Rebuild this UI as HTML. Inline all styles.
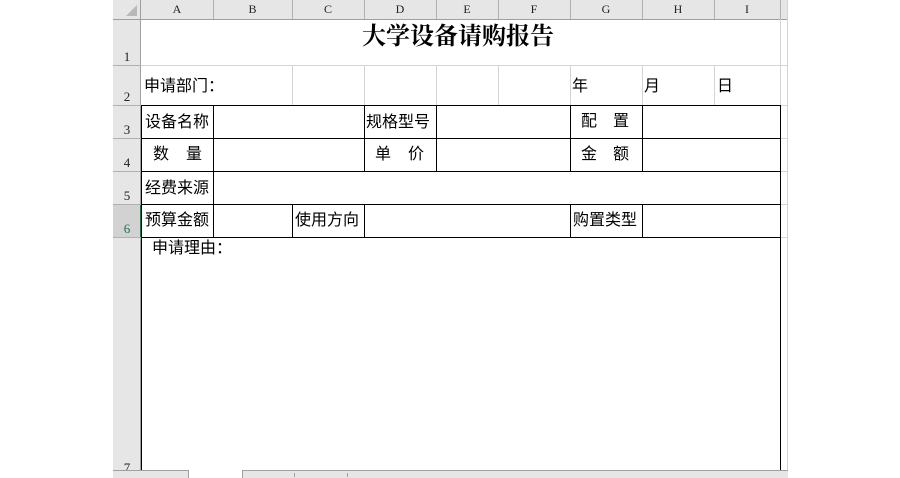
<!DOCTYPE html>
<html><head><meta charset="utf-8"><style>
body{margin:0;width:900px;height:477px;background:#fff;position:relative;overflow:hidden;font-family:"Liberation Sans","Noto Sans CJK SC",sans-serif;}
.a{position:absolute;}
.h{position:absolute;height:1px;}
.v{position:absolute;width:1px;}
.g{background:#d4d4d4;}
.k{background:#000;}
.hd{position:absolute;top:2px;font-family:"Liberation Serif",serif;font-size:12px;color:#222;text-align:center;}
.rn{position:absolute;left:113px;width:28px;text-align:center;font-family:"Liberation Serif",serif;font-size:13px;color:#222;}
.t{position:absolute;font-size:16px;color:#000;white-space:pre;line-height:18px;font-weight:normal;}
</style></head><body>
<div class="a" style="left:113px;top:0;width:674px;height:19px;background:#e6e6e6"></div>
<div class="a" style="left:113px;top:0;width:28px;height:470px;background:#e6e6e6"></div>
<div class="h" style="left:113px;top:19px;width:674px;background:#9f9f9f"></div>
<div class="v" style="left:140px;top:0;height:470px;background:#9f9f9f"></div>
<div class="v" style="left:787px;top:0;height:470px;background:#d4d4d4"></div>
<svg class="a" style="left:126px;top:5px" width="12" height="12"><polygon points="11,0 11,11 0,11" fill="#b8b8b8"/></svg>
<div class="v" style="left:213px;top:0;height:19px;background:#b0b0b0"></div>
<div class="v" style="left:292px;top:0;height:19px;background:#b0b0b0"></div>
<div class="v" style="left:364px;top:0;height:19px;background:#b0b0b0"></div>
<div class="v" style="left:436px;top:0;height:19px;background:#b0b0b0"></div>
<div class="v" style="left:498px;top:0;height:19px;background:#b0b0b0"></div>
<div class="v" style="left:570px;top:0;height:19px;background:#b0b0b0"></div>
<div class="v" style="left:642px;top:0;height:19px;background:#b0b0b0"></div>
<div class="v" style="left:714px;top:0;height:19px;background:#b0b0b0"></div>
<div class="v" style="left:780px;top:0;height:19px;background:#b0b0b0"></div>
<div class="hd" style="left:141px;width:72px">A</div>
<div class="hd" style="left:213px;width:79px">B</div>
<div class="hd" style="left:292px;width:72px">C</div>
<div class="hd" style="left:364px;width:72px">D</div>
<div class="hd" style="left:436px;width:62px">E</div>
<div class="hd" style="left:498px;width:72px">F</div>
<div class="hd" style="left:570px;width:72px">G</div>
<div class="hd" style="left:642px;width:72px">H</div>
<div class="hd" style="left:714px;width:66px">I</div>
<div class="h" style="left:113px;top:65px;width:28px;background:#b0b0b0"></div>
<div class="h" style="left:113px;top:105px;width:28px;background:#b0b0b0"></div>
<div class="h" style="left:113px;top:138px;width:28px;background:#b0b0b0"></div>
<div class="h" style="left:113px;top:171px;width:28px;background:#b0b0b0"></div>
<div class="h" style="left:113px;top:204px;width:28px;background:#b0b0b0"></div>
<div class="h" style="left:113px;top:237px;width:28px;background:#b0b0b0"></div>
<div class="a" style="left:113px;top:205px;width:28px;height:32px;background:#d2d2d2"></div>
<div class="v" style="left:140px;top:205px;height:32px;width:2px;background:#217346"></div>
<div class="rn" style="top:49px">1</div>
<div class="rn" style="top:89px">2</div>
<div class="rn" style="top:122px">3</div>
<div class="rn" style="top:155px">4</div>
<div class="rn" style="top:188px">5</div>
<div class="rn" style="top:221px;color:#217346">6</div>
<div class="rn" style="top:460px">7</div>
<div class="h g" style="left:141px;top:65px;width:646px"></div>
<div class="h g" style="left:780px;top:105px;width:7px"></div>
<div class="h g" style="left:780px;top:138px;width:7px"></div>
<div class="h g" style="left:780px;top:171px;width:7px"></div>
<div class="h g" style="left:780px;top:204px;width:7px"></div>
<div class="h g" style="left:780px;top:237px;width:7px"></div>
<div class="v g" style="left:292px;top:65px;height:40px"></div>
<div class="v g" style="left:364px;top:65px;height:40px"></div>
<div class="v g" style="left:436px;top:65px;height:40px"></div>
<div class="v g" style="left:498px;top:65px;height:40px"></div>
<div class="v g" style="left:570px;top:65px;height:40px"></div>
<div class="v g" style="left:642px;top:65px;height:40px"></div>
<div class="v g" style="left:714px;top:65px;height:40px"></div>
<div class="v g" style="left:780px;top:19px;height:86px"></div>
<div class="h k" style="left:141px;top:105px;width:640px"></div>
<div class="h k" style="left:141px;top:138px;width:640px"></div>
<div class="h k" style="left:141px;top:171px;width:640px"></div>
<div class="h k" style="left:141px;top:204px;width:640px"></div>
<div class="h k" style="left:141px;top:237px;width:640px"></div>
<div class="v k" style="left:141px;top:105px;height:365px"></div>
<div class="v k" style="left:780px;top:105px;height:365px"></div>
<div class="v k" style="left:213px;top:105px;height:132px"></div>
<div class="v k" style="left:364px;top:105px;height:66px"></div>
<div class="v k" style="left:436px;top:105px;height:66px"></div>
<div class="v k" style="left:570px;top:105px;height:66px"></div>
<div class="v k" style="left:642px;top:105px;height:66px"></div>
<div class="v k" style="left:292px;top:204px;height:33px"></div>
<div class="v k" style="left:364px;top:204px;height:33px"></div>
<div class="v k" style="left:570px;top:204px;height:33px"></div>
<div class="v k" style="left:642px;top:204px;height:33px"></div>
<div class="t" style="left:362px;top:24px;font-size:24px;line-height:26px;font-weight:bold;font-family:'Liberation Serif','Noto Serif CJK SC',serif">大学设备请购报告</div>
<div class="t" style="left:144px;top:78px">申请部门：</div>
<div class="t" style="left:572px;top:78px">年</div>
<div class="t" style="left:644px;top:78px">月</div>
<div class="t" style="left:717px;top:78px">日</div>
<div class="t" style="left:145px;top:114px">设备名称</div>
<div class="t" style="left:366px;top:114px">规格型号</div>
<div class="t" style="left:581px;top:113px">配</div><div class="t" style="left:613px;top:113px">置</div>
<div class="t" style="left:153px;top:146px">数</div><div class="t" style="left:186px;top:146px">量</div>
<div class="t" style="left:375px;top:146px">单</div><div class="t" style="left:408px;top:146px">价</div>
<div class="t" style="left:581px;top:146px">金</div><div class="t" style="left:613px;top:146px">额</div>
<div class="t" style="left:145px;top:180px">经费来源</div>
<div class="t" style="left:145px;top:212px">预算金额</div>
<div class="t" style="left:295px;top:212px">使用方向</div>
<div class="t" style="left:573px;top:212px">购置类型</div>
<div class="t" style="left:152px;top:240px">申请理由：</div>
<div class="a" style="left:113px;top:470px;width:75px;height:7px;background:#e6e6e6;border-top:1px solid #a0a0a0;border-right:1px solid #a0a0a0"></div>
<div class="a" style="left:242px;top:470px;width:545px;height:7px;background:#e6e6e6;border-top:1px solid #a0a0a0;border-left:1px solid #a0a0a0"></div>
<div class="v" style="left:294px;top:473px;height:4px;background:#a0a0a0"></div>
<div class="v" style="left:347px;top:473px;height:4px;background:#a0a0a0"></div>
</body></html>
